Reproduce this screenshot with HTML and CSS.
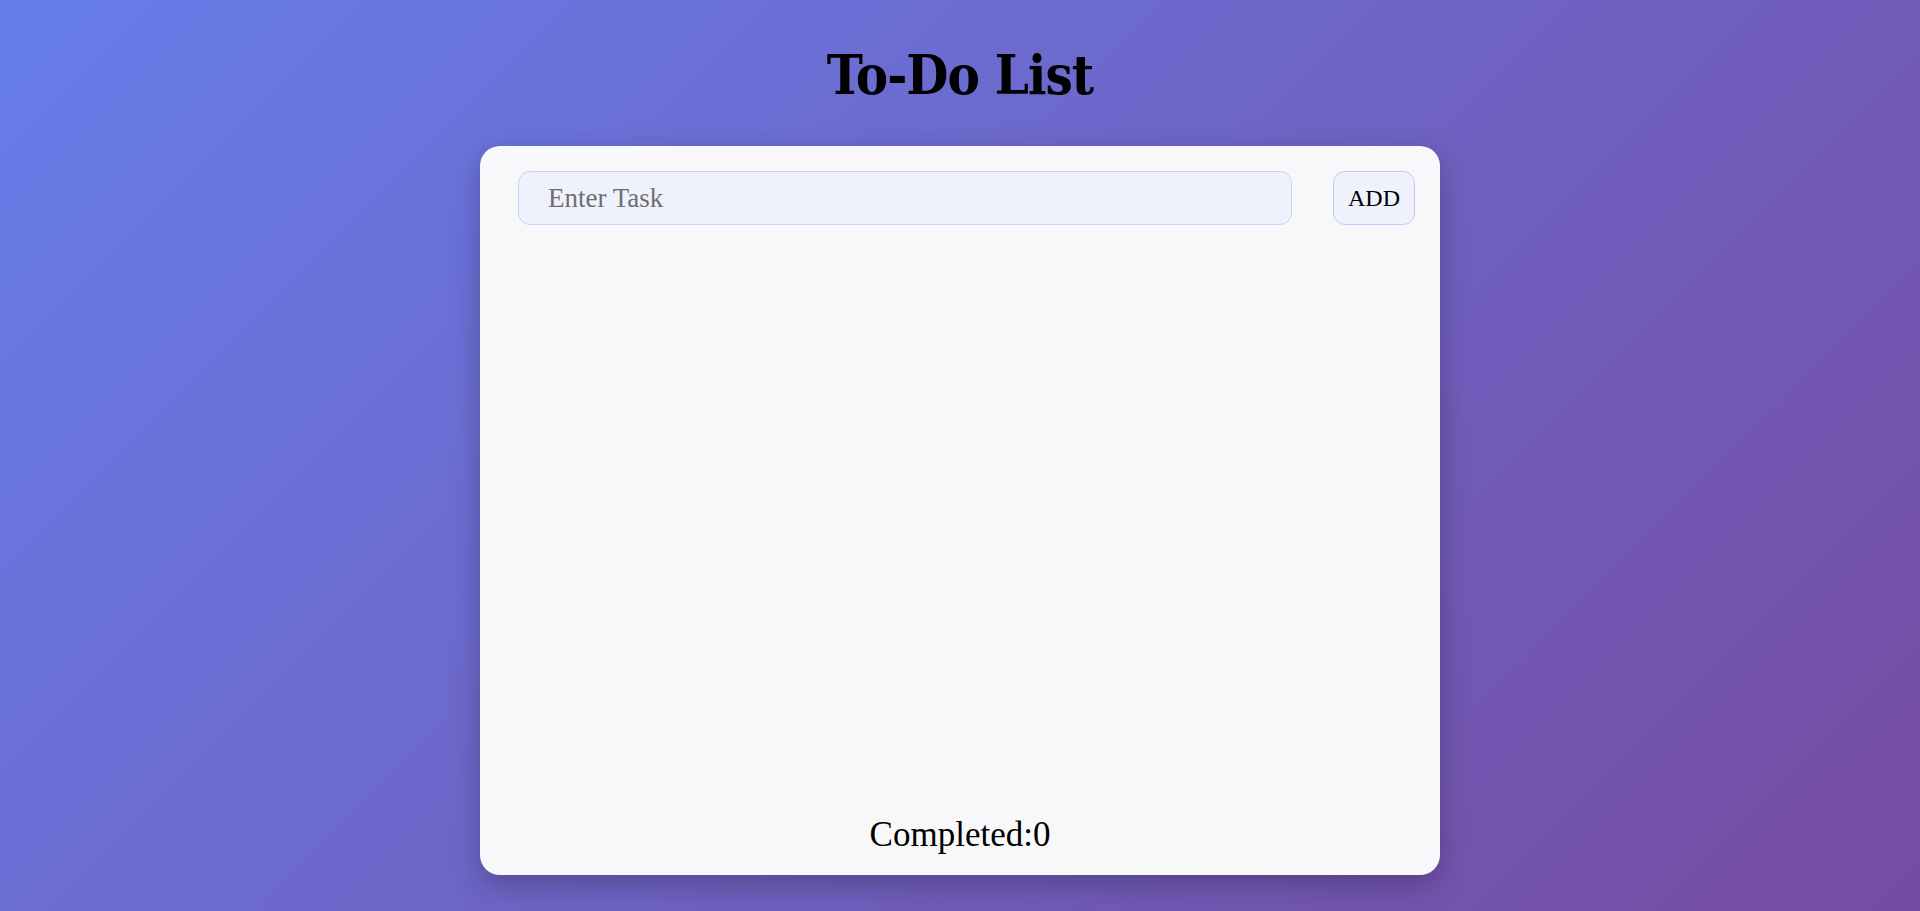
FILE: index.html
```html
<!DOCTYPE html>
<html lang="en">
<head>
<meta charset="utf-8">
<title>To-Do List</title>
<link rel="stylesheet" href="styles.css">
</head>
<body>
  <h1 class="title">To-Do List</h1>
  <main class="card">
    <form class="entry">
      <input class="task-input" type="text" placeholder="Enter Task">
      <button class="add-btn" type="button">ADD</button>
    </form>
    <ul class="task-list"></ul>
    <p class="completed">Completed:0</p>
  </main>
</body>
</html>
```
FILE: styles.css
```css
html, body {
  margin: 0;
  height: 100%;
}
body {
  background: linear-gradient(135deg, #667eea 0%, #764ba2 100%);
  font-family: "Liberation Serif", "DejaVu Serif", serif;
  display: flex;
  flex-direction: column;
  align-items: center;
  box-sizing: border-box;
  padding-top: 35px;
}
.title {
  margin: 0;
  font-family: "DejaVu Serif Condensed", "DejaVu Serif", serif;
  font-weight: bold;
  font-size: 54px;
  line-height: 80px;
  color: #000;
  letter-spacing: -1px;
}
.card {
  margin-top: 31px;
  width: 960px;
  height: 729px;
  background: #f8f8fa;
  border-radius: 20px;
  box-shadow: 0 10px 30px rgba(0, 0, 0, 0.25);
  display: flex;
  flex-direction: column;
  box-sizing: border-box;
  padding: 25px 25px 0 38px;
}
.entry {
  display: flex;
  gap: 41px;
  margin: 0;
}
.task-input {
  width: 774px;
  height: 54px;
  box-sizing: border-box;
  border: 1px solid #c9d3f7;
  border-radius: 12px;
  background: #eff2fd;
  padding: 0 0 0 29px;
  font-family: "Liberation Serif", serif;
  font-size: 27px;
  color: #333;
  outline: none;
}
.task-input::placeholder {
  color: #6f6f6f;
}
.add-btn {
  width: 82px;
  height: 54px;
  box-sizing: border-box;
  border: 1px solid #bfcaf6;
  border-radius: 12px;
  background: #eff2fd;
  font-family: "Liberation Serif", serif;
  font-size: 24px;
  color: #000;
  padding: 0;
}
.task-list {
  flex: 1;
  margin: 0;
  padding: 0;
  list-style: none;
}
.completed {
  margin: 0 0 0 -13px;
  text-align: center;
  font-size: 35px;
  line-height: 40px;
  height: 60px;
  color: #000;
}
```
